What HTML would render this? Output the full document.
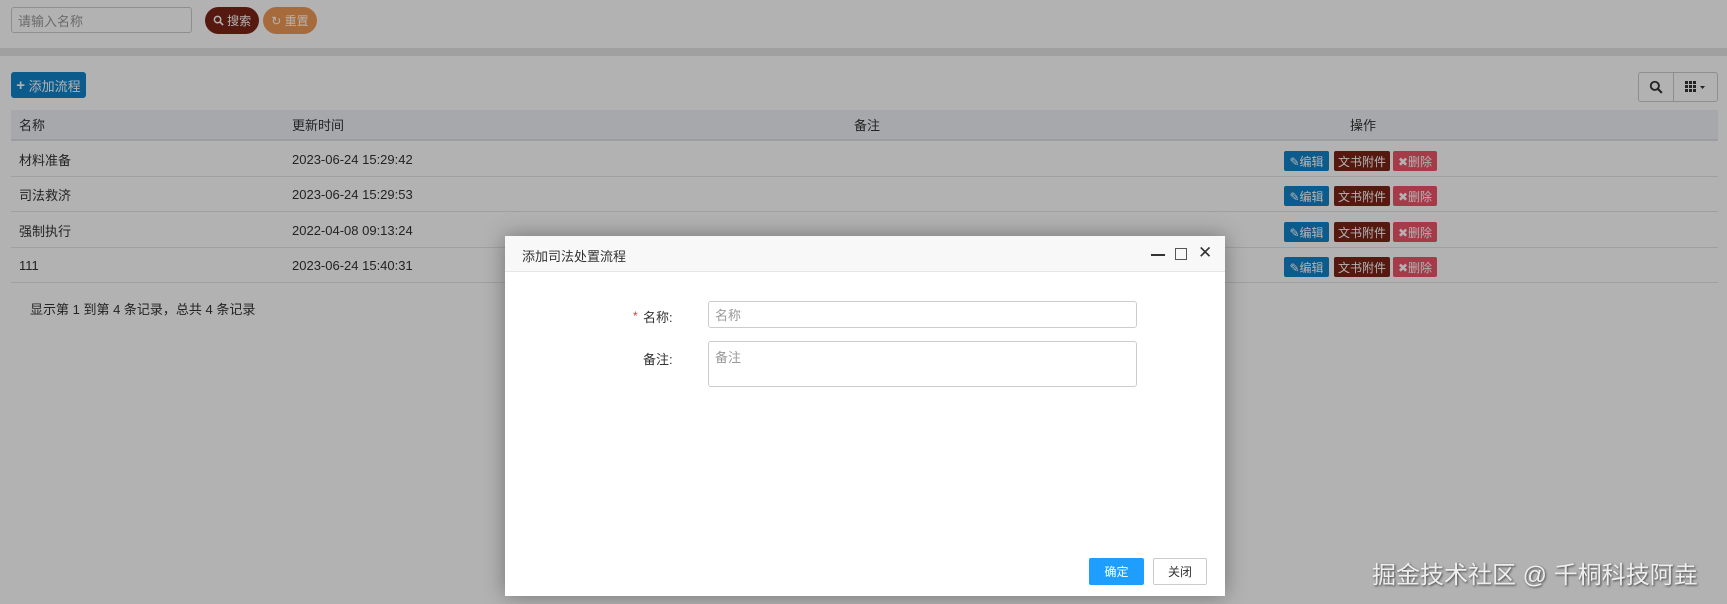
<!DOCTYPE html>
<html><head><meta charset="utf-8"><style>
*{box-sizing:border-box;margin:0;padding:0}
body{width:1727px;height:604px;overflow:hidden;background:#fff;font-family:"Liberation Sans","Noto Sans CJK SC",sans-serif;font-size:13px;color:#333;position:relative}
.abs{position:absolute}
.inp{border:1px solid #ccc;border-radius:3px;color:#999;padding:0 6px;display:flex;align-items:center;font-size:13px}
.btn{display:flex;align-items:center;justify-content:center;color:#fff;font-size:12px}
.hdr{left:11px;top:110px;width:1707px;height:31px;background:#eef1f5;border-bottom:2px solid #dde2e7}
.row{left:11px;width:1707px;height:35px;border-bottom:1px solid #e5e5e5}
.cell{position:absolute;top:0;height:100%;display:flex;align-items:center}
.ab{position:absolute;top:9px;height:20px;border-radius:2px;color:#fff;font-size:12px;display:flex;align-items:center;justify-content:center}
#ov{position:absolute;left:0;top:0;width:1727px;height:604px;background:rgba(0,0,0,0.3)}
</style></head><body>
<div class="abs inp" style="left:11px;top:7px;width:181px;height:26px">请输入名称</div>
<div class="abs btn" style="left:205px;top:7px;width:54px;height:27px;border-radius:14px;background:#7a2418"><svg width="11" height="11" viewBox="0 0 12 12"><circle cx="5" cy="5" r="3.5" fill="none" stroke="#fff" stroke-width="1.6"/><path d="M7.6 7.6L11 11" stroke="#fff" stroke-width="1.8"/></svg>&nbsp;搜索</div>
<div class="abs btn" style="left:263px;top:7px;width:54px;height:27px;border-radius:14px;background:#f09a55">&#8635;&nbsp;重置</div>
<div class="abs" style="left:0;top:48px;width:1727px;height:8px;background:#e6e6e6"></div>
<div class="abs btn" style="left:11px;top:72px;width:75px;height:26px;border-radius:3px;background:#1083c9;font-size:13px"><b style="font-size:15px">+</b>&nbsp;添加流程</div>
<div class="abs" style="left:1638px;top:72px;width:80px;height:30px;border:1px solid #ccc;border-radius:3px;background:#fff"><div style="position:absolute;left:34px;top:0;width:1px;height:28px;background:#ccc"></div>
<svg style="position:absolute;left:10px;top:7px" width="14" height="14" viewBox="0 0 12 12"><circle cx="5" cy="5" r="3.5" fill="none" stroke="#333" stroke-width="1.6"/><path d="M7.6 7.6L11 11" stroke="#333" stroke-width="1.8"/></svg>
<svg style="position:absolute;left:46px;top:8px" width="22" height="12" viewBox="0 0 22 12"><g fill="#333"><rect x="0" y="0" width="3" height="3"/><rect x="4" y="0" width="3" height="3"/><rect x="8" y="0" width="3" height="3"/><rect x="0" y="4" width="3" height="3"/><rect x="4" y="4" width="3" height="3"/><rect x="8" y="4" width="3" height="3"/><rect x="0" y="8" width="3" height="3"/><rect x="4" y="8" width="3" height="3"/><rect x="8" y="8" width="3" height="3"/><path d="M15 5h5l-2.5 3z"/></g></svg></div>
<div class="abs hdr"><div class="cell" style="left:8px">名称</div><div class="cell" style="left:281px">更新时间</div><div class="cell" style="left:843px">备注</div><div class="cell" style="left:1339px">操作</div></div>
<div class="abs row" style="top:142px"><div class="cell" style="left:8px">材料准备</div><div class="cell" style="left:281px">2023-06-24 15:29:42</div><div class="ab" style="left:1273px;width:45px;background:#1083c9">&#9998;编辑</div><div class="ab" style="left:1323px;width:56px;background:#7a2418">文书附件</div><div class="ab" style="left:1382px;width:44px;background:#ec5468">&#10006;删除</div></div>
<div class="abs row" style="top:177px"><div class="cell" style="left:8px">司法救济</div><div class="cell" style="left:281px">2023-06-24 15:29:53</div><div class="ab" style="left:1273px;width:45px;background:#1083c9">&#9998;编辑</div><div class="ab" style="left:1323px;width:56px;background:#7a2418">文书附件</div><div class="ab" style="left:1382px;width:44px;background:#ec5468">&#10006;删除</div></div>
<div class="abs row" style="top:213px"><div class="cell" style="left:8px">强制执行</div><div class="cell" style="left:281px">2022-04-08 09:13:24</div><div class="ab" style="left:1273px;width:45px;background:#1083c9">&#9998;编辑</div><div class="ab" style="left:1323px;width:56px;background:#7a2418">文书附件</div><div class="ab" style="left:1382px;width:44px;background:#ec5468">&#10006;删除</div></div>
<div class="abs row" style="top:248px"><div class="cell" style="left:8px">111</div><div class="cell" style="left:281px">2023-06-24 15:40:31</div><div class="ab" style="left:1273px;width:45px;background:#1083c9">&#9998;编辑</div><div class="ab" style="left:1323px;width:56px;background:#7a2418">文书附件</div><div class="ab" style="left:1382px;width:44px;background:#ec5468">&#10006;删除</div></div>
<div class="abs" style="left:30px;top:299px">显示第 1 到第 4 条记录，总共 4 条记录</div>
<div id="ov"></div>
<div class="abs" style="left:505px;top:236px;width:720px;height:360px;background:#fff;box-shadow:0 0 20px rgba(0,0,0,0.35)">
 <div style="height:36px;background:#f8f8f8;border-bottom:1px solid #e6e6e6;position:relative">
  <span style="position:absolute;left:17px;top:10px;font-size:13px">添加司法处置流程</span>
  <div style="position:absolute;left:646px;top:18px;width:14px;height:2px;background:#333"></div>
  <div style="position:absolute;left:670px;top:12px;width:12px;height:12px;border:1px solid #555"></div>
  <span style="position:absolute;left:693px;top:7px;font-size:17px;color:#333">&#10005;</span>
 </div>
 <span style="position:absolute;left:128px;top:73px;color:#e33;font-size:12px">*</span>
 <span style="position:absolute;left:138px;top:71px">名称:</span>
 <div class="abs inp" style="left:203px;top:65px;width:429px;height:27px">名称</div>
 <span style="position:absolute;left:138px;top:113px">备注:</span>
 <div class="abs inp" style="left:203px;top:105px;width:429px;height:46px;align-items:flex-start;padding-top:5px">备注</div>
 <div class="abs btn" style="left:584px;top:322px;width:55px;height:27px;background:#1e9fff;border-radius:2px">确定</div>
 <div class="abs btn" style="left:648px;top:322px;width:54px;height:27px;background:#fff;border:1px solid #ccc;color:#333;border-radius:2px">关闭</div>
</div>
<div class="abs" style="left:1372px;top:555px;font-size:24px;color:#eee;text-shadow:1px 1px 2px #444;white-space:nowrap">掘金技术社区 @ 千桐科技阿垚</div>
</body></html>
